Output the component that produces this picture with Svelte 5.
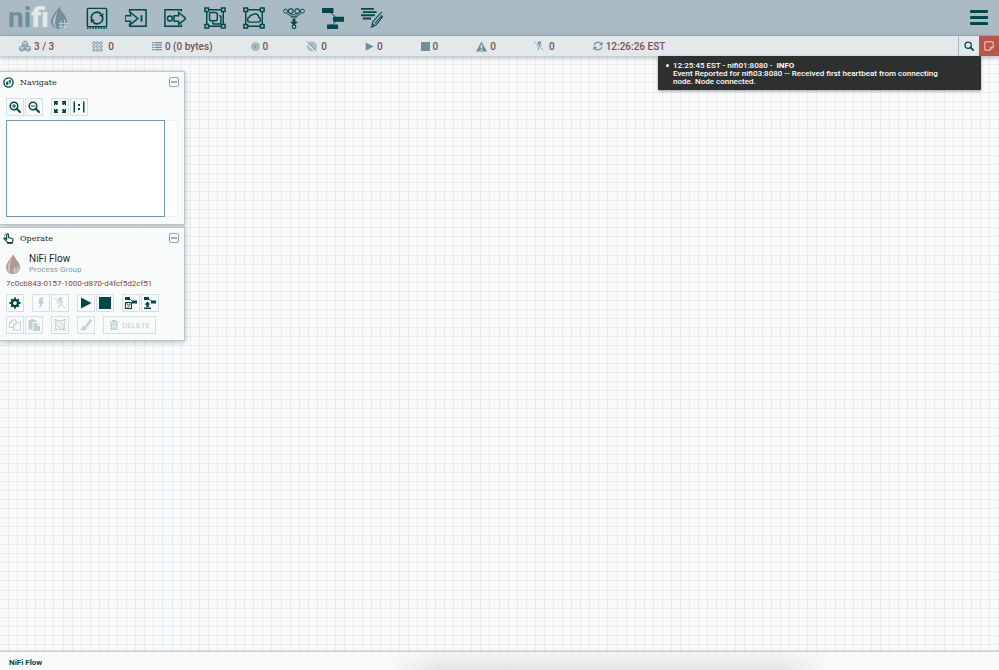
<script>
  const components = [
    ['processor', 'Processor'],
    ['port-in', 'Input Port'],
    ['port-out', 'Output Port'],
    ['group', 'Process Group'],
    ['remote', 'Remote Process Group'],
    ['funnel', 'Funnel'],
    ['template', 'Template'],
    ['label', 'Label']
  ];

  const stats = [
    { icon: 'cluster', label: 'Connected nodes', value: '3 / 3', size: 12, gap: 3 },
    { icon: 'threads', label: 'Active threads', value: '0', size: 11, gap: 5 },
    { icon: 'list', label: 'Queued', value: '0 (0 bytes)', size: 10, gap: 3 },
    { icon: 'transmitting', label: 'Transmitting', value: '0', size: 9, gap: 3 },
    { icon: 'not-transmitting', label: 'Not transmitting', value: '0', size: 11, gap: 4 },
    { icon: 'play', label: 'Running', value: '0', size: 9, gap: 3 },
    { icon: 'stop', label: 'Stopped', value: '0', size: 9, gap: 3 },
    { icon: 'warning', label: 'Invalid', value: '0', size: 11, gap: 3 },
    { icon: 'flash-off', label: 'Disabled', value: '0', size: 10, gap: 5 },
    { icon: 'refresh', label: 'Last refresh', value: '12:26:26 EST', size: 10, gap: 3 }
  ];

  const navGroups = [
    [['zoom-in', 'Zoom In'], ['zoom-out', 'Zoom Out']],
    [['fit', 'Fit'], ['actual', 'Actual Size']]
  ];

  const operateRows = [
    [
      [['gear', 'Configuration', true]],
      [['flash', 'Enable', false], ['flash-off', 'Disable', false]],
      [['play', 'Start', true], ['stop', 'Stop', true]],
      [['template-save', 'Create Template', true], ['template-up', 'Upload Template', true]]
    ],
    [
      [['copy', 'Copy', false], ['paste', 'Paste', false]],
      [['group', 'Group', false]],
      [['brush', 'Change Color', false]]
    ]
  ];

  let showNavigate = $state(true);
  let showOperate = $state(true);
  let showBulletins = $state(true);
</script>

{#snippet corners()}
  <path d="M5 3h14M5 21h14M3 5v14M21 5v14" />
  <path d="M1 1h4v4H1zM19 1h4v4h-4zM1 19h4v4H1zM19 19h4v4h-4z" />
{/snippet}

{#snippet icon(name, size)}
  <svg class="icon" width={size} height={size} viewBox="0 0 24 24" fill="none" stroke="currentColor" stroke-width="1.6" aria-hidden="true">
    {#if name === 'processor'}
      <rect x="1.500" y="1.500" width="21" height="20" rx="1" />
      <path d="M1 23.200h22" stroke-dasharray="1.500 1.500" />
      <path d="M6.200 13.500A6 6 0 0 1 16.500 7.800M17.800 10.500A6 6 0 0 1 7.500 16.200" stroke-width="1.800" />
      <path d="M18.800 6.500v5l-4.500-2zM5.200 17.500v-5l4.500 2z" fill="currentColor" stroke="none" />
    {:else if name === 'port-in'}
      <path d="M5 6V3h18v18H5v-3" />
      <path d="M0 9.500h6V6l8 6.500L6 19v-3.500H0z" />
      <path d="M18 9v7" stroke-width="2" />
    {:else if name === 'port-out'}
      <path d="M19 5V3H1v18h18v-2" />
      <path d="M11 9.500h5V6l8 6.500L16 19v-3.500h-5z" />
      <circle cx="6.500" cy="12.500" r="2.700" />
    {:else if name === 'group'}
      {@render corners()}
      <rect x="6" y="6" width="8.500" height="9" rx="2" />
      <path d="M16.500 9.500h.5a1.500 1.500 0 0 1 1.500 1.500v5.500a2 2 0 0 1-2 2h-5a2 2 0 0 1-2-2V16" />
    {:else if name === 'remote'}
      {@render corners()}
      <path d="M7.500 16.500a2.800 2.800 0 0 1-.3-5.500 2.600 2.600 0 0 1 3-2.300 4 4 0 0 1 7 2.600 2.700 2.700 0 0 1-.2 5.200z" />
    {:else if name === 'funnel'}
      <circle cx="2.800" cy="4.500" r="2.200" stroke-width="1" />
      <circle cx="21.200" cy="4.500" r="2.200" stroke-width="1" />
      <rect x="6" y="2" width="5" height="5" rx="2" stroke-width="1.200" />
      <rect x="13" y="2" width="5" height="5" rx="2" stroke-width="1.200" />
      <path d="M4 7l5 3M20 7l-5 3M8.500 8.500h7" stroke-width="1" />
      <path d="M8.500 10h7v1.500h-7zM10.500 12.500h3V16h3L12 20l-4.500-4h3z" fill="currentColor" stroke="none" />
      <circle cx="12" cy="21.500" r="2" stroke-width="1.200" />
    {:else if name === 'template'}
      <path d="M0 1h12.500v5.500H0zM12 10.500h12V16H12zM5.500 19h12v5h-12z" fill="currentColor" stroke="none" />
      <path d="M9 6l6 5M16 15l-5 5" stroke-width="1" />
    {:else if name === 'label'}
      <path d="M0 2h14M2 5.500h15M0 9h15M2 12.500h9" stroke-width="2" />
      <path d="M22.500 5.500L13 16l-1.500 6 5-2.500L24 10M15 18l8-9M12.500 18.500l2.500 2" stroke-width="1.200" />
    {:else if name === 'cluster'}
      <path d="M12 2l5 2.500v6L12 13l-5-2.500v-6zM6 11.500l5 2.500v6l-5 2.500L1 20v-6zM18 11.500l5 2.500v6l-5 2.500-5-2.500v-6z" fill="currentColor" fill-opacity=".6" />
      <path d="M7 4.500l5 2.500 5-2.500M1 14l5 2.500 5-2.500M13 14l5 2.500 5-2.500" stroke="#e3e8eb" />
    {:else if name === 'threads'}
      <path d="M4 4h16v16H4zM12 4v16M4 12h16" />
      <g fill="#e3e8eb">
        {#each [4, 12, 20] as cx}{#each [4, 12, 20] as cy}<circle {cx} {cy} r="2.600" />{/each}{/each}
      </g>
    {:else if name === 'list'}
      <path d="M0 4h4M6 4h18M0 9.500h4M6 9.500h18M0 15h4M6 15h18M0 20.500h4M6 20.500h18" stroke-width="3" />
    {:else if name === 'transmitting'}
      <circle cx="12" cy="12" r="11" fill="currentColor" fill-opacity=".4" stroke-opacity=".6" />
      <circle cx="12" cy="12" r="6.500" stroke-opacity=".6" />
      <circle cx="12" cy="12" r="3" fill="currentColor" stroke="none" />
    {:else if name === 'not-transmitting'}
      <circle cx="13" cy="12" r="10" fill="currentColor" fill-opacity=".4" stroke-opacity=".6" />
      <circle cx="13" cy="12" r="5" stroke-opacity=".6" />
      <path d="M1 4l20 20" stroke="#e3e8eb" stroke-width="3" />
      <path d="M2 1l21 21" stroke-width="2" />
    {:else if name === 'play'}
      <path d="M2 1l21 11L2 23z" fill="currentColor" stroke="none" />
    {:else if name === 'stop'}
      <path d="M0 0h24v24H0z" fill="currentColor" stroke="none" />
    {:else if name === 'warning'}
      <path fill-rule="evenodd" d="M12 1l12 22H0zM10.300 8v8h3.400V8zm0 10v3h3.400v-3z" fill="currentColor" stroke="none" />
    {:else if name === 'flash'}
      <path d="M10 1h8l-4 8h5L8 24l3-11H6z" fill="currentColor" stroke="none" />
    {:else if name === 'flash-off'}
      <path d="M10 1h8l-4 8h5L8 24l3-11H6z" fill="currentColor" stroke="none" />
      <path d="M3 3l18 19" stroke="#f4f7f8" stroke-width="4" />
      <path d="M1 2l21 20" stroke-width="2" />
    {:else if name === 'refresh'}
      <path d="M2.500 10.500A9.500 9.500 0 0 1 19 6M21.500 13.500A9.500 9.500 0 0 1 5 18" stroke-width="3" />
      <path d="M23 1v9h-9zM1 23v-9h9z" fill="currentColor" stroke="none" />
    {:else if name === 'search' || name === 'zoom-in' || name === 'zoom-out'}
      <circle cx="10" cy="10" r="7.500" stroke-width="3" />
      <path d="M15.500 15.500l6.500 6.500" stroke-width="4" stroke-linecap="round" />
      {#if name !== 'search'}<path d="M6 10h8" stroke-width="2" />{/if}
      {#if name === 'zoom-in'}<path d="M10 6v8" stroke-width="2" />{/if}
    {:else if name === 'note'}
      <path d="M2 2h20v13l-7 7H2z" stroke-width="2.400" />
      <path d="M22 15h-7v7" stroke-width="2.400" />
    {:else if name === 'fit'}
      <path d="M0 0h9L6.500 3.500l2 2-3 3-2-2L0 9zM24 0v9l-3.500-2.500-2 2-3-3 2-2L15 0zM0 24v-9l3.500 2.500 2-2 3 3-2 2L9 24zM24 24h-9l2.500-3.500-2-2 3-3 2 2L24 15z" fill="currentColor" stroke="none" />
    {:else if name === 'actual'}
      <path d="M2.500 1v22M21.500 1v22" stroke-width="3" />
      <path d="M10 6h4v4h-4zM10 14h4v4h-4z" fill="currentColor" stroke="none" />
    {:else if name === 'compass'}
      <circle cx="12" cy="12" r="10" stroke-width="3" />
      <path fill-rule="evenodd" d="M17 5.500v7L7 18.500v-7zM11 10.500v4l3-2V8.800z" fill="currentColor" stroke="none" />
    {:else if name === 'hand'}
      <path d="M8 15V4a2 2 0 0 1 4 0v6l8 2c1.500.5 2 1 2 2.500L20.500 21h-10L4 14.500 2 12c0-2.500 3-2 4 0l2 2" stroke-width="2.400" />
      <path d="M9 22h12" stroke-width="3" />
      <path d="M3 6a7 7 0 0 1 3-4" stroke-width="1.500" />
    {:else if name === 'gear'}
      <circle cx="12" cy="12" r="6" stroke-width="4.500" />
      <path d="M12 1v4M12 19v4M1 12h4M19 12h4M4.500 4.500l3 3M16.500 16.500l3 3M4.500 19.500l3-3M16.500 7.500l3-3" stroke-width="4" />
    {:else if name === 'template-save' || name === 'template-up'}
      <path d="M0 0h10v6H0zM14 7h10v6H14z" fill="currentColor" stroke="none" />
      <path d="M10 4l5 5" />
      {#if name === 'template-save'}
        <rect x="1" y="11" width="12" height="12" stroke-width="2" />
        <path d="M4 12v4h6v-4M4 22l6-4" stroke-width="1.500" />
      {:else}
        <path d="M7 9l6 6H9.500v5h-5v-5H1zM0 21h14v3H0z" fill="currentColor" stroke="none" />
      {/if}
    {:else if name === 'copy'}
      <path d="M9 17H1V7l5-5h8v4" stroke-width="2" />
      <path d="M6 2v5H1M9 12l5-5h9v15H9zM14 7v5H9" stroke-width="2" />
    {:else if name === 'paste'}
      <path d="M1 2h5V0h6v2h5v4H9v15H1zM11 8h7v6h6v10H11zM19.500 8l4.500 4.500h-4.500z" fill="currentColor" stroke="none" />
    {:else if name === 'brush'}
      <path d="M21 0c2 0 4 2 2.500 4.500L15 16l-4-4zM9.500 13l4.500 4.500C13 23 6 25 0 21c4 0 3-7 9.500-8z" fill="currentColor" stroke="none" />
    {:else if name === 'trash'}
      <path d="M8 0h8l1 3h6v3H1V3h6zM3 8h18l-1.500 16h-15z" fill="currentColor" stroke="none" />
      <path d="M8.500 10v11M12 10v11M15.500 10v11" stroke="#f9fafb" />
    {/if}
  </svg>
{/snippet}

{#snippet drop(width, height)}
  <svg class="drop" {width} {height} viewBox="0 0 18 24" aria-hidden="true">
    <path d="M8.500 0C7 5 0 10 0 16.500A8 7.500 0 0 0 9 24 8 7.500 0 0 0 17 16.500C17 10 10 5 8.500 0z" fill="currentColor" />
    <path d="M7 4C5.500 9 2 12 2 17c0 3 2 5 4 6-3-5-1-10 1-19z" fill="#fff" opacity=".45" />
    <path d="M8 18.500h10M8 21.500h9M10.500 15v9M14.500 14v9" stroke="#fff" stroke-width="1" opacity=".6" />
  </svg>
{/snippet}

{#snippet tool([name, label, enabled = true])}
  <button type="button" class="tool" aria-label={label} title={label} disabled={!enabled}>
    {@render icon(name, 12)}
  </button>
{/snippet}

{#snippet panelHead(name, label, open, toggle)}
  <header class="panel-head">
    {@render icon(name, 11)}
    <h2>{label}</h2>
    <button type="button" class="toggle" aria-label="Toggle {label}" aria-expanded={open} onclick={toggle}></button>
  </header>
{/snippet}

<div class="shell">
  <header class="masthead">
    <div class="logo" role="img" aria-label="nifi">
      <span>ni<b>fi</b></span>
      {@render drop(17, 25)}
    </div>
    <nav class="components" aria-label="Components">
      {#each components as [name, label]}
        <button type="button" aria-label={label} title={label}>{@render icon(name, 22)}</button>
      {/each}
    </nav>
    <button type="button" class="menu" aria-label="Global menu"><i></i><i></i><i></i></button>
  </header>

  <div class="status">
    <ul class="stats">
      {#each stats as s}
        <li title={s.label} style="gap: {s.gap}px">{@render icon(s.icon, s.size)}<span>{s.value}</span></li>
      {/each}
    </ul>
    <button type="button" class="search" aria-label="Search">{@render icon('search', 10)}</button>
    <button type="button" class="bulletin-toggle" aria-label="Bulletins" onclick={() => (showBulletins = !showBulletins)}>
      {@render icon('note', 10)}
    </button>
    {#if showBulletins}
      <ul class="bulletins">
        <li>
          <div>12:25:45 EST - nifi01:8080 - &nbsp;<b>INFO</b></div>
          <div>Event Reported for nifi03:8080 -- Received first heartbeat from connecting node. Node connected.</div>
        </li>
      </ul>
    {/if}
  </div>

  <main class="canvas">
    <section class="panel">
      {@render panelHead('compass', 'Navigate', showNavigate, () => (showNavigate = !showNavigate))}
      {#if showNavigate}
        <div class="tools">
          {#each navGroups as group}
            <div class="tool-group">{#each group as item}{@render tool(item)}{/each}</div>
          {/each}
        </div>
        <div class="birdseye"><div class="viewport"></div></div>
      {/if}
    </section>

    <section class="panel">
      {@render panelHead('hand', 'Operate', showOperate, () => (showOperate = !showOperate))}
      {#if showOperate}
        <div class="context">
          {@render drop(15, 22)}
          <div>
            <div class="name">NiFi Flow</div>
            <div class="type">Process Group</div>
          </div>
        </div>
        <div class="uuid">7c0cb843-0157-1000-d870-d4fcf5d2cf51</div>
        {#each operateRows as row, i}
          <div class="tools">
            {#each row as group}
              <div class="tool-group">{#each group as item}{@render tool(item)}{/each}</div>
            {/each}
            {#if i === 1}
              <button type="button" class="tool delete" disabled>{@render icon('trash', 10)}DELETE</button>
            {/if}
          </div>
        {/each}
      {/if}
    </section>
  </main>

  <footer class="crumbs"><a href="#root">NiFi Flow</a></footer>
</div>

<style>
  :global(body) {
    margin: 0;
  }

  .shell {
    box-sizing: border-box;
    display: flex;
    flex-direction: column;
    min-height: 100vh;
    font-family: Roboto, 'Liberation Sans', sans-serif;
    color: #004849;
    background:
      repeating-linear-gradient(to right, transparent 0 calc(100% / 110 - 1px), #e8ecee calc(100% / 110 - 1px) calc(100% / 110)),
      repeating-linear-gradient(to bottom, transparent 0 1px, #e8ecee 1px 2px, transparent 2px calc(100% / 74)),
      #f9fafc;
  }

  button {
    box-sizing: border-box;
    display: flex;
    align-items: center;
    justify-content: center;
    margin: 0;
    padding: 0;
    border: 0;
    background: none;
    color: inherit;
    font: inherit;
  }

  ul {
    margin: 0;
    padding: 0;
    list-style: none;
  }

  .icon,
  .drop {
    display: block;
    flex: none;
  }

  .masthead {
    display: flex;
    align-items: stretch;
    height: 35px;
    border-bottom: 1px solid #9fb3bc;
    background: #aabbc3;
  }

  .logo {
    display: flex;
    align-items: center;
    gap: 2px;
    width: 69px;
    padding-left: 8px;
    color: #728e9b;
    font-size: 28px;
    font-weight: 700;
    line-height: 34px;
  }

  .logo b {
    color: #e3e8eb;
  }

  .components {
    display: flex;
    width: 315px;
  }

  .components button {
    flex: 1;
  }

  .menu {
    flex-direction: column;
    gap: 3px;
    width: 40px;
    margin-left: auto;
  }

  .menu i {
    width: 18px;
    height: 3px;
    border-radius: 1px;
    background: #004849;
  }

  .status {
    position: relative;
    z-index: 2;
    display: flex;
    height: 20px;
    border-bottom: 1px solid #c7d2d7;
    background: #e3e8eb;
    box-shadow: 0 1px 4px rgba(0, 0, 0, 0.25);
  }

  .stats {
    display: flex;
    flex: 1;
    gap: 38px;
    padding-left: 19px;
  }

  .stats li {
    display: flex;
    align-items: center;
    color: #728e9b;
    font-size: 10px;
    font-weight: 500;
    white-space: nowrap;
  }

  .stats span {
    color: #775351;
  }

  .search {
    width: 21px;
    border-left: 1px solid #aabbc3;
  }

  .bulletin-toggle {
    width: 20px;
    background: #ba554a;
    color: #f0d0cc;
  }

  .bulletins {
    position: absolute;
    top: 20px;
    right: 18px;
    box-sizing: border-box;
    width: 323px;
    padding: 6px 24px 4px 15px;
    border-radius: 1px;
    background: #2e3030;
    box-shadow: 0 1px 3px rgba(0, 0, 0, 0.4);
    color: #fff;
    font-size: 8px;
    font-weight: 500;
    line-height: 8px;
  }

  .bulletins li {
    position: relative;
  }

  .bulletins li::before {
    content: '';
    position: absolute;
    top: 2px;
    left: -7px;
    width: 3px;
    height: 3px;
    border-radius: 50%;
    background: #fff;
  }

  .canvas {
    display: flex;
    flex: 1;
    flex-direction: column;
    align-items: flex-start;
    gap: 2px;
    padding-top: 14px;
  }

  .panel {
    box-sizing: border-box;
    width: 185px;
    padding: 0 6px 6px;
    border: 1px solid #b9c6cd;
    border-left: 0;
    background: #f9fafa;
    box-shadow: 0 1px 5px rgba(0, 0, 0, 0.25);
  }

  .panel-head {
    display: flex;
    align-items: center;
    gap: 6px;
    height: 20px;
    margin-left: -3px;
  }

  .panel-head h2 {
    flex: 1;
    margin: 0;
    color: #262626;
    font-family: 'DejaVu Serif', serif;
    font-size: 8px;
    font-weight: 400;
  }

  .toggle {
    width: 10px;
    height: 10px;
    margin-right: -1px;
    border: 1px solid #8ba3af;
    border-radius: 2px;
  }

  .toggle::before {
    content: '';
    width: 6px;
    height: 2px;
    background: #9db1bb;
  }

  .tools {
    display: flex;
    gap: 8px;
    margin-top: 4px;
  }

  .tool-group {
    display: flex;
    gap: 1px;
  }

  .tool {
    width: 18px;
    height: 18px;
    border: 1px solid #d5e0e3;
    background: #f9fafb;
  }

  .tool:disabled {
    color: #c1d0d3;
  }

  .delete {
    gap: 3px;
    width: 53px;
    font-size: 8px;
    font-weight: 400;
  }

  .birdseye {
    height: 97px;
    margin-top: 4px;
    background: #fff;
    box-shadow: inset 0 0 0 1px #eef1f2;
  }

  .panel:first-child .tools {
    margin-top: 6px;
  }

  .panel:first-child {
    padding-bottom: 7px;
  }

  .viewport {
    box-sizing: border-box;
    width: 159px;
    height: 97px;
    border: 1px solid #6f9ab3;
  }

  .context {
    display: flex;
    align-items: center;
    gap: 8px;
    margin-top: 5px;
    color: #ad9897;
  }

  .name {
    color: #262626;
    font-size: 10px;
    line-height: 12px;
  }

  .type {
    color: #7f9baa;
    font-size: 8px;
    line-height: 10px;
  }

  .uuid {
    margin-top: 3px;
    color: #7b4a47;
    font-size: 8px;
    line-height: 12px;
  }

  .crumbs {
    box-sizing: border-box;
    display: flex;
    align-items: center;
    height: 19px;
    padding: 2px 0 0 9px;
    border-top: 1px solid #c7d2d7;
    background:
      linear-gradient(to right, #f9f9f9 39%, transparent 44% 78%, #f9f9f9 83%),
      linear-gradient(to bottom, #f5f5f5, #e4e4e4);
    box-shadow: 0 -1px 1px rgba(0, 0, 0, 0.1);
    font-size: 8px;
    font-weight: 700;
  }

  .crumbs a {
    color: #004849;
    text-decoration: none;
  }
</style>
